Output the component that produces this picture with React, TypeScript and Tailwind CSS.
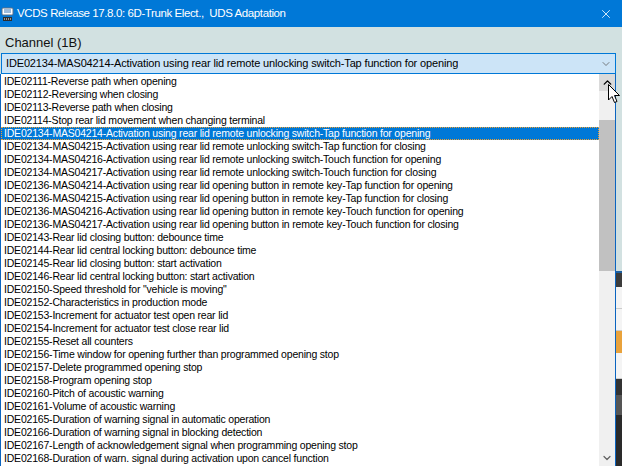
import { ChevronDown, ChevronUp, X } from 'lucide-react';

const items = [
  'IDE02111-Reverse path when opening',
  'IDE02112-Reversing when closing',
  'IDE02113-Reverse path when closing',
  'IDE02114-Stop rear lid movement when changing terminal',
  'IDE02134-MAS04214-Activation using rear lid remote unlocking switch-Tap function for opening',
  'IDE02134-MAS04215-Activation using rear lid remote unlocking switch-Tap function for closing',
  'IDE02134-MAS04216-Activation using rear lid remote unlocking switch-Touch function for opening',
  'IDE02134-MAS04217-Activation using rear lid remote unlocking switch-Touch function for closing',
  'IDE02136-MAS04214-Activation using rear lid opening button in remote key-Tap function for opening',
  'IDE02136-MAS04215-Activation using rear lid opening button in remote key-Tap function for closing',
  'IDE02136-MAS04216-Activation using rear lid opening button in remote key-Touch function for opening',
  'IDE02136-MAS04217-Activation using rear lid opening button in remote key-Touch function for closing',
  'IDE02143-Rear lid closing button: debounce time',
  'IDE02144-Rear lid central locking button: debounce time',
  'IDE02145-Rear lid closing button: start activation',
  'IDE02146-Rear lid central locking button: start activation',
  'IDE02150-Speed threshold for "vehicle is moving"',
  'IDE02152-Characteristics in production mode',
  'IDE02153-Increment for actuator test open rear lid',
  'IDE02154-Increment for actuator test close rear lid',
  'IDE02155-Reset all counters',
  'IDE02156-Time window for opening further than programmed opening stop',
  'IDE02157-Delete programmed opening stop',
  'IDE02158-Program opening stop',
  'IDE02160-Pitch of acoustic warning',
  'IDE02161-Volume of acoustic warning',
  'IDE02165-Duration of warning signal in automatic operation',
  'IDE02166-Duration of warning signal in blocking detection',
  'IDE02167-Length of acknowledgement signal when programming opening stop',
  'IDE02168-Duration of warn. signal during activation upon cancel function',
];

const SELECTED = 4;

// small cable/plug icon of the VCDS window
function AppIcon() {
  return (
    <svg width="13" height="16" viewBox="0 0 13 16">
      <rect x="1" y="2" width="11" height="7" rx="1" fill="#fff" stroke="#5a6f86" />
      <path d="M3 4h7M3 6h7" stroke="#3a78b8" strokeWidth="1" />
      <rect x="2" y="11" width="9" height="4" fill="#2d2d2d" />
      <path d="M3 13h7" stroke="#fff" strokeWidth="1" strokeDasharray="1 1" />
    </svg>
  );
}

function Cursor() {
  return (
    <svg width="13" height="20" viewBox="0 0 13 20" className="absolute left-[608px] top-[84px]">
      <path d="M0.5 0.5 L0.5 16 L4 12.5 L6.5 18.5 L9 17.5 L6.5 11.5 L11.5 11.5 Z" fill="#fff" stroke="#000" strokeWidth="1" />
    </svg>
  );
}

export default function App() {
  return (
    <div className="relative w-[622px] h-[466px] overflow-hidden bg-[#d2e1e1] font-['Liberation_Sans',Arial,sans-serif]">
      {/* title bar */}
      <div className="h-[27px] bg-[#0078d7] flex items-center text-white">
        <div className="w-[16px] pl-[1px] flex items-center"><AppIcon /></div>
        <span className="text-[11.5px] tracking-[-0.4px] ml-[1px]">VCDS Release 17.8.0: 6D-Trunk Elect.,&nbsp; UDS Adaptation</span>
        <div className="ml-auto mr-[9px] flex items-center">
          <X size={14} strokeWidth={1.4} />
        </div>
      </div>

      <div className="flex">
        <div className="w-[616px] flex flex-col">
          <div className="h-[26px] pl-[5px] pt-[8px] text-[13px] leading-[16px] text-[#111]">Channel (1B)</div>
          {/* combo */}
          <div className="ml-[1px] h-[21px] border border-[#0078d7] bg-[#cce4f7] flex items-center pl-[4px] pr-[3px] text-[11px] tracking-[-0.15px] text-black">
            <span className="truncate">{items[SELECTED]}</span>
            <ChevronDown size={12} strokeWidth={1.5} className="ml-auto text-[#555]" />
          </div>
          {/* dropdown list */}
          <div className="h-[393px] border border-t-0 border-[#0a64c0] bg-white flex">
            <div className="flex-1 pt-[1px]">
              {items.map((t, i) => (
                <div
                  key={t}
                  className={
                    i === SELECTED
                      ? 'h-[13px] leading-[13px] pl-[3px] text-[10.5px] tracking-[-0.2px] whitespace-nowrap bg-[#0078d7] text-white outline outline-1 outline-dotted outline-[#f0a030] -outline-offset-1'
                      : 'h-[13px] leading-[13px] pl-[3px] text-[10.5px] tracking-[-0.2px] whitespace-nowrap text-black'
                  }
                >
                  {t}
                </div>
              ))}
            </div>
            {/* scrollbar */}
            <div className="w-[16px] bg-[#f0f0f0] flex flex-col">
              <div className="h-[17px] bg-[#dadada] flex items-center justify-center">
                <ChevronUp size={13} strokeWidth={2.6} className="text-black" />
              </div>
              <div className="h-[29px]" />
              <div className="h-[151px] bg-[#c1c1c1]" />
              <div className="flex-1" />
              <div className="h-[16px] flex items-center justify-center">
                <ChevronDown size={12} strokeWidth={2.4} className="text-[#606060]" />
              </div>
            </div>
          </div>
        </div>
        {/* whatever lies behind on the right */}
        <div className="w-[6px] flex flex-col">
          <div className="h-[244px]" />
          <div className="h-[2px] bg-[#1f5f9f]" />
          <div className="h-[14px] bg-[#3c3c3c]" />
          <div className="h-[22px] bg-[#f4f4f4] border-b border-[#ccc]" />
          <div className="h-[22px] bg-[#f4f4f4] border-b border-[#ccc]" />
          <div className="h-[22px] bg-[#e9a23b]" />
          <div className="h-[26px] bg-[#f4f4f4] border-b border-[#ccc]" />
          <div className="h-[16px] bg-[#333]" />
          <div className="h-[20px] bg-[#555]" />
          <div className="flex-1 bg-[#2a2a2a]" />
        </div>
      </div>
      <Cursor />
    </div>
  );
}
